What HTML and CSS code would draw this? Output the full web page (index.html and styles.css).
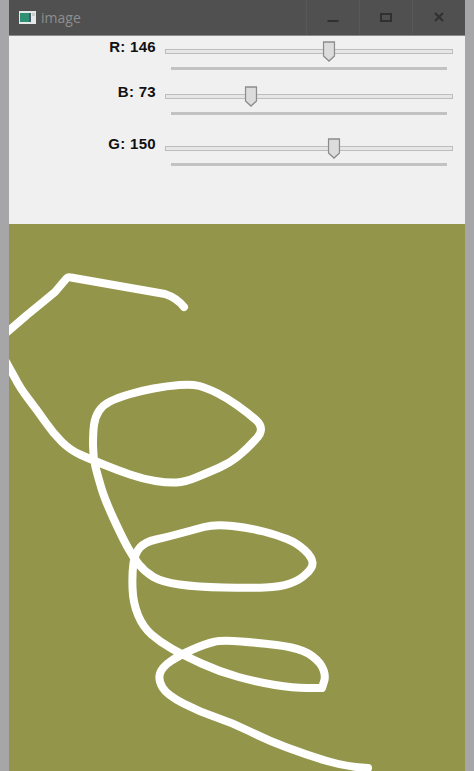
FILE: index.html
```html
<!DOCTYPE html>
<html lang="en">
<head>
<meta charset="UTF-8">
<title>image</title>
<link rel="stylesheet" href="styles.css">
</head>
<body>
<div class="window">
    <div class="titlebar">
        <svg class="app-icon" width="17" height="13" viewBox="0 0 17 13">
            <rect width="17" height="13" fill="#e4e8e6"/>
            <rect x="1" y="2" width="9" height="9" fill="#2f8f72"/>
            <rect x="10" y="2" width="2" height="9" fill="#4a5a68"/>
            <rect x="13" y="2" width="3" height="3" fill="#c6ccc8"/>
        </svg>
        <span class="title">image</span>
        <div class="controls">
            <div class="control">
                <svg width="12" height="10" viewBox="0 0 12 10"><rect x="0.5" y="8" width="11" height="2" fill="#303030"/></svg>
            </div>
            <div class="control">
                <svg width="12" height="10" viewBox="0 0 12 10"><rect x="1" y="2" width="10" height="7" fill="none" stroke="#303030" stroke-width="2"/></svg>
            </div>
            <div class="control">
                <svg width="12" height="10" viewBox="0 0 12 10"><path d="M2 1 L10 9 M10 1 L2 9" fill="none" stroke="#303030" stroke-width="2"/></svg>
            </div>
        </div>
    </div>

    <div class="panel">
        <div class="slider-group">
            <div class="slider-row">
                <label class="slider-label">R: 146</label>
                <div class="slider">
                    <div class="track"></div>
                    <svg class="thumb" style="left: 56.9%;" width="13" height="21" viewBox="0 0 13 21"><path d="M1 1 H12 V15 L6.5 20 L1 15 Z" fill="#dcdcdc" stroke="#8c8c8c" stroke-width="1.3"/></svg>
                </div>
            </div>
            <div class="slider-line"></div>
        </div>
        <div class="slider-group">
            <div class="slider-row">
                <label class="slider-label">B: 73</label>
                <div class="slider">
                    <div class="track"></div>
                    <svg class="thumb" style="left: 29.9%;" width="13" height="21" viewBox="0 0 13 21"><path d="M1 1 H12 V15 L6.5 20 L1 15 Z" fill="#dcdcdc" stroke="#8c8c8c" stroke-width="1.3"/></svg>
                </div>
            </div>
            <div class="slider-line"></div>
        </div>
        <div class="slider-group slider-group-last">
            <div class="slider-row">
                <label class="slider-label">G: 150</label>
                <div class="slider">
                    <div class="track"></div>
                    <svg class="thumb" style="left: 58.7%;" width="13" height="21" viewBox="0 0 13 21"><path d="M1 1 H12 V15 L6.5 20 L1 15 Z" fill="#dcdcdc" stroke="#8c8c8c" stroke-width="1.3"/></svg>
                </div>
            </div>
            <div class="slider-line"></div>
        </div>
    </div>

    <!-- viewBox uses page coordinates so the points read straight off the screenshot -->
    <svg class="canvas" viewBox="9 224 456 547" width="456" height="547">
        <path class="stroke" d="M5 334 L27 315 Q43 302 55 292 L66 279 Q68 276.5 71 277.5 L165 294 Q177 298 184 307"/>
        <path class="stroke" d="M5 360 L15 378 Q20 388 28.5 399 Q37 410 45 421.5 Q53 433 61.5 441.5 Q70 450 80 454.5 Q90 459 103.5 464.5
            Q117 470 130 474.5 Q143 479 155.5 481 Q168 483 176.5 482.5 Q185 482 196 477.5 Q207 473 218.5 468 Q230 463 239 455.5
            Q248 448 256 439 Q266 429 256 420 Q248 413 237.5 405.5 Q227 398 217 393 Q207 388 199.5 386 Q192 384 179.5 385
            Q167 386 153.5 388.5 Q140 391 128.5 394.5 Q117 398 110 401.5 Q103 405 99 411 Q95 417 94 425 Q93 433 93 445
            Q93 457 95.5 467 Q98 477 101.5 488.5 Q105 500 113.5 518.5 Q122 537 127.5 547 Q133 557 139 564.5 Q145 572 153.5 577
            Q162 582 179.5 584.5 Q197 587 223.5 587.5 Q250 588 265 587.5 Q280 587 290 583.5 Q300 580 306 574 Q313 568 312.5 562.5
            Q312 557 304.5 550 Q297 543 287 539 Q277 535 263.5 531.5 Q250 528 232.5 526 Q215 524 204 527 Q193 530 180 533.5
            Q167 537 156 539.5 Q145 542 140 547.5 Q135 553 133.5 563 Q132 573 132.5 588 Q133 603 138 615 Q143 627 151.5 634.5
            Q160 642 171.5 648.5 Q183 655 201.5 663.5 Q220 672 238.5 677 Q257 682 275 685 Q293 688 307 688 L322 688 L324.5 680
            Q326 672 320 663.5 Q313 655 303 651 Q293 647 276.5 645 Q260 643 241 641.5 Q222 640 213.5 642 Q205 644 192.5 649.5
            Q180 655 171 661 Q162 667 160 673.5 Q158 680 162.5 687.5 Q167 695 183.5 703.5 Q200 712 216.5 717.5 Q233 723 250 731.5
            Q267 740 287 747.5 Q307 755 327 761 Q347 767 368 768"/>
    </svg>
</div>
</body>
</html>
```

FILE: styles.css
```css
html, body {
    margin: 0;
    padding: 0;
    height: 771px;
    overflow: hidden;
}

body {
    background-color: #a6a6a8;
    font-family: "Liberation Sans", Arial, sans-serif;
}

.window {
    width: 456px;
    margin-left: 9px;
    display: flex;
    flex-direction: column;
}

.titlebar {
    height: 35px;
    display: flex;
    align-items: center;
    background-color: #505050;
    border-bottom: 1px solid #8a8a8a;
}

.app-icon {
    margin-left: 10px;
}

.title {
    margin-left: 5px;
    font-family: "Open Sans", sans-serif;
    font-size: 14px;
    color: #8e8e8e;
}

.controls {
    margin-left: auto;
    display: flex;
    height: 100%;
}

.control {
    width: 53px;
    display: flex;
    align-items: center;
    justify-content: center;
    border-left: 1px solid #585858;
    padding-bottom: 1px;
    box-sizing: border-box;
}

.panel {
    height: 188px;
    box-sizing: border-box;
    padding-top: 5px;
    background-color: #f0f0f0;
}

.slider-group + .slider-group {
    margin-top: 16px;
}

.slider-group.slider-group-last {
    margin-top: 23px;
}

.slider-row {
    display: flex;
    height: 20px;
    column-gap: 9px;
}

.slider-label {
    width: 147px;
    text-align: right;
    font-size: 15px;
    font-weight: bold;
    line-height: 12px;
    letter-spacing: 0.3px;
    color: #111;
}

.slider {
    position: relative;
    width: 288px;
    display: flex;
    align-items: center;
}

.track {
    width: 100%;
    height: 5px;
    box-sizing: border-box;
    background-color: #e6e6e6;
    border: 1px solid #bdbdbd;
}

.thumb {
    position: absolute;
    top: 0;
    transform: translateX(-6.5px);
}

.slider-line {
    width: 276px;
    height: 3px;
    margin-top: 6px;
    margin-left: 162px;
    background-color: #c2c2c2;
}

.slider-group-last .slider-line {
    margin-top: 5px;
}

.canvas {
    display: block;
    background-color: #93964a;
}

.stroke {
    fill: none;
    stroke: #fff;
    stroke-width: 8;
    stroke-linecap: round;
    stroke-linejoin: round;
}
```
